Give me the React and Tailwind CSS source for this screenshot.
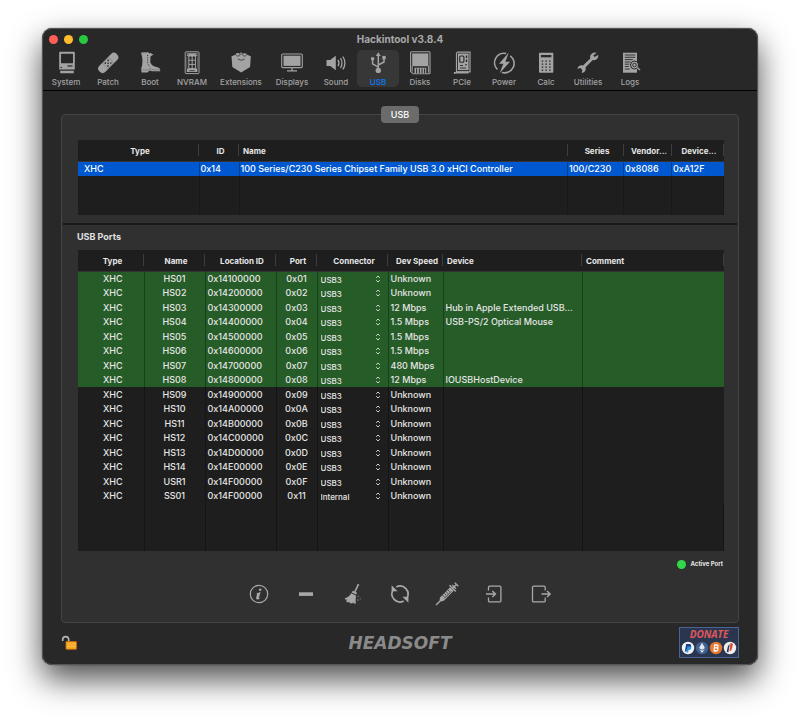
import { useState } from "react";

// Small dark cut-outs inside the toolbar icons use the toolbar colour
const icons = {
  System: (
    <>
      <path d="M6 .8h14q.8 0 .8.8v17H5.200v-17q0-.8.8-.8z" fill="#a3a3a3" />
      <rect x="7" y="2.800" width="12" height="9.500" rx=".6" fill="#282828" />
      <rect x="13.500" y="14.400" width="5" height="1.200" fill="#282828" />
      <rect x="6.600" y="16" width="1.500" height="1" fill="#282828" />
      <rect x="6.200" y="19.700" width="13.600" height="2.600" rx=".4" fill="#a3a3a3" />
    </>
  ),
  Patch: (
    <g transform="rotate(-45 12 12)">
      <rect x="0" y="7.800" width="24.500" height="8.600" rx="4" fill="#a3a3a3" />
      <rect x="8" y="8.300" width="8.200" height="7.600" fill="none" stroke="#6b6b6b" strokeWidth=".5" />
      <g fill="#282828">
        <circle cx="10" cy="10.200" r=".8" />
        <circle cx="14" cy="10.200" r=".8" />
        <circle cx="12" cy="12.100" r=".8" />
        <circle cx="10" cy="14" r=".8" />
        <circle cx="14" cy="14" r=".8" />
      </g>
    </g>
  ),
  Boot: (
    <>
      <path
        d="M3 1.600 10.500 1.300 11 2.500 12.500 2 15.400 3.500 12.500 5.500 12.300 11.500Q13.500 14.600 16.500 15.600 21.800 16.400 22.200 18.500V20.300H14L11.500 19.600 9.500 21.500H3.500L3.200 18Q5.800 10 3 1.600z"
        fill="#a3a3a3"
      />
      <path d="M9.600 4v7.500q.6 3 3 4.600" fill="none" stroke="#282828" strokeWidth=".9" strokeDasharray="1 1.200" />
      <path d="M4 19h6l2-1.500 3 1.300h7" fill="none" stroke="#6b6b6b" strokeWidth=".6" />
    </>
  ),
  NVRAM: (
    <>
      <rect x="5.200" y=".8" width="13.800" height="21.800" rx=".8" fill="none" stroke="#a3a3a3" strokeWidth="1" />
      <path d="M6.800 2.300h10.600v3h-1.500v12.200h1.500v3.500H6.800v-3.500h1.500V5.300H6.800z" fill="#a3a3a3" />
      <path d="M6.800 6v11M17.400 6v11" stroke="#8a8a8a" strokeWidth=".6" />
      <g fill="#282828">
        <rect x="9.400" y="5.500" width="2.200" height="3.200" />
        <rect x="12.700" y="5.500" width="2.200" height="3.200" />
        <rect x="9.400" y="9.700" width="2.200" height="3.200" />
        <rect x="12.700" y="9.700" width="2.200" height="3.200" />
        <rect x="9.400" y="13.900" width="2.200" height="3.200" />
        <rect x="12.700" y="13.900" width="2.200" height="3.200" />
        <circle cx="8" cy="3.600" r=".6" />
        <circle cx="16.200" cy="3.600" r=".6" />
      </g>
      <path d="M9.500 19.700h5.200" stroke="#282828" strokeWidth=".8" />
    </>
  ),
  Extensions: (
    <>
      <path d="M2.500 5.200 7 3.400V2.600q2-1 3.600 0L12 1.300l2 1.200q1.800-.8 3.500.2v.8l4.300 1.700-.7 10.800L12.200 21.600 3.300 16z" fill="#a3a3a3" />
      <path d="M7 4.500q2 1.300 3.800 0M13.600 4.500q2 1.300 3.800 0M8.800 8q3.400 2.600 6.800 0M10 2.800q2.200.9 4.400 0" fill="none" stroke="#333" strokeWidth=".8" />
    </>
  ),
  Displays: (
    <>
      <rect x="1.700" y="3" width="20.600" height="13.600" rx="1" fill="none" stroke="#a3a3a3" strokeWidth="1.100" />
      <rect x="3.500" y="4.700" width="17" height="10.200" fill="#a3a3a3" />
      <path d="M12 16.600v2.800M7 19.800h10" stroke="#a3a3a3" strokeWidth="1.300" />
    </>
  ),
  Sound: (
    <>
      <path d="M2.500 9H6.200l5.600-4.300v14.600L6.200 15H2.500z" fill="#a3a3a3" />
      <path d="M14 8.800q2 3.200 0 6.400M16.500 7q3 5 0 10M18.900 5.500q4 6.500 0 13" fill="none" stroke="#a3a3a3" strokeWidth="1.300" />
    </>
  ),
  USB: (
    <>
      <path d="M12.300 4v14M12.300 16.200 6.600 12.800V8.500M12.300 14l5.700-3V7" fill="none" stroke="#a3a3a3" strokeWidth="1.500" />
      <path d="M12.300 1.300 14.800 5H9.800z" fill="#a3a3a3" />
      <circle cx="12.300" cy="19.400" r="2.700" fill="#a3a3a3" />
      <circle cx="6.600" cy="7.800" r="1.800" fill="#a3a3a3" />
      <rect x="16.300" y="4.900" width="3.400" height="3.400" fill="#a3a3a3" />
    </>
  ),
  Disks: (
    <>
      <path d="M3.600.8H21a1 1 0 0 1 1 1v20a1 1 0 0 1-1 1H5.200L2.600 20.500V1.800a1 1 0 0 1 1-1z" fill="none" stroke="#a3a3a3" strokeWidth="1.100" />
      <rect x="4.200" y="2.400" width="16.200" height="12.800" fill="#a3a3a3" />
      <path d="M6.500 16.700h11.800v5.600H6.500z" fill="#a3a3a3" />
      <path d="M8.600 17.500v4.800M11.300 17.500v4.800M14 17.500v4.800M16.600 17.500v4.800" stroke="#282828" strokeWidth="1" />
      <path d="M4.200 15v5.500M20.400 15v6.700" stroke="#a3a3a3" strokeWidth="1" />
    </>
  ),
  PCIe: (
    <>
      <path d="M7.500 1.200H20v19.600H6.500V2.200zM4.500 23v-1.500h3" fill="none" stroke="#a3a3a3" strokeWidth="1.200" />
      <path d="M4.500 22.500h14v-2H6v1z" fill="#a3a3a3" />
      <rect x="8" y="2.500" width="10.600" height="16.600" fill="#a3a3a3" />
      <rect x="9.700" y="5" width="4.200" height="6.200" rx="1" fill="none" stroke="#282828" strokeWidth="1.100" />
      <rect x="15.800" y="4.500" width="1.400" height="2.500" fill="#282828" />
      <rect x="15.800" y="8.500" width="1.400" height="2.500" fill="#282828" />
      <rect x="15.300" y="13" width="1.400" height="1.400" fill="#282828" />
      <path d="M10 14.500h3M10 17h6" stroke="#282828" strokeWidth=".9" />
    </>
  ),
  Power: (
    <>
      <path d="M14.200 2.500a9.500 9.500 0 0 0-8.800 16M18.300 4.800a9.500 9.500 0 0 1-8.400 16.700" fill="none" stroke="#a3a3a3" strokeWidth="1.600" />
      <path d="M16.800 1.400 7 12.800h4.300L7.600 22.300 18 10.700h-4.600z" fill="#a3a3a3" />
    </>
  ),
  Calc: (
    <>
      <rect x="5" y="1.700" width="14.300" height="20" rx=".7" fill="#a3a3a3" />
      <rect x="6.900" y="4" width="10.500" height="2.300" fill="#282828" />
      <path d="M7.700 10.200h9.200M7.700 13.200h9.200M7.700 16.200h9.200M7.700 19.200h9.200" stroke="#282828" strokeWidth="1.300" strokeDasharray="1.500 2.200" />
    </>
  ),
  Utilities: (
    <path
      d="M20.700 1.700q-2.500-.8-4.700.7-2.500 1.700-1.700 5L7 14.500q-2.300-.8-4.200.7-1.300 1-1.300 2.600l3-.7 1.800 1.900-.6 3q2 0 3.300-1.700 1.300-1.800.6-4.100l7.200-7.200q3 .6 4.600-1.500 1.200-1.600.8-3.800L18.800 6l-1.600-1.500z"
      fill="#a3a3a3"
    />
  ),
  Logs: (
    <>
      <rect x="5" y="1.700" width="14" height="20" fill="#a3a3a3" />
      <path d="M6.800 4h10.400M6.800 6.300h10.400M6.800 8.600h8M6.800 11h5.500M6.800 13.200h4.500M6.800 15.500h4M6.800 18h5" stroke="#282828" strokeWidth=".9" />
      <circle cx="16.500" cy="14" r="4" fill="#a3a3a3" stroke="#282828" strokeWidth="1" />
      <circle cx="16.500" cy="14" r="1.800" fill="none" stroke="#282828" strokeWidth=".9" />
      <path d="m19.200 16.500 2.800 2.600" stroke="#a3a3a3" strokeWidth="1.400" />
    </>
  ),
};

const toolbar = [
  { name: "System", width: "w-[42px]" },
  { name: "Patch", width: "w-[42px]" },
  { name: "Boot", width: "w-[42px]" },
  { name: "NVRAM", width: "w-[42px]" },
  { name: "Extensions", width: "w-[56px]" },
  { name: "Displays", width: "w-[46px]" },
  { name: "Sound", width: "w-[42px]" },
  { name: "USB", width: "w-[42px]" },
  { name: "Disks", width: "w-[42px]" },
  { name: "PCIe", width: "w-[42px]" },
  { name: "Power", width: "w-[42px]" },
  { name: "Calc", width: "w-[42px]" },
  { name: "Utilities", width: "w-[42px]" },
  { name: "Logs", width: "w-[42px]" },
];

const controllerColumns = [
  { title: "Type", width: "w-[121px]", align: "text-center" },
  { title: "ID", width: "w-[40px]", align: "text-center" },
  { title: "Name", width: "", align: "text-left" },
  { title: "Series", width: "w-[56px]", align: "text-center" },
  { title: "Vendor...", width: "w-[48px]", align: "text-center" },
  { title: "Device...", width: "w-[52px]", align: "text-center" },
];

const portColumns = [
  { title: "Type", width: "w-[66px]", align: "text-center" },
  { title: "Name", width: "w-[61px]", align: "text-center" },
  { title: "Location ID", width: "w-[71px]", align: "text-center" },
  { title: "Port", width: "w-[41px]", align: "text-center" },
  { title: "Connector", width: "w-[71px]", align: "text-center" },
  { title: "Dev Speed", width: "w-[55px]", align: "text-center" },
  { title: "Device", width: "w-[139px]", align: "text-left" },
  { title: "Comment", width: "", align: "text-left" },
];

const ports = [
  { name: "HS01", location: "0x14100000", port: "0x01", connector: "USB3", speed: "Unknown", device: "", active: true },
  { name: "HS02", location: "0x14200000", port: "0x02", connector: "USB3", speed: "Unknown", device: "", active: true },
  { name: "HS03", location: "0x14300000", port: "0x03", connector: "USB3", speed: "12 Mbps", device: "Hub in Apple Extended USB...", active: true },
  { name: "HS04", location: "0x14400000", port: "0x04", connector: "USB3", speed: "1.5 Mbps", device: "USB-PS/2 Optical Mouse", active: true },
  { name: "HS05", location: "0x14500000", port: "0x05", connector: "USB3", speed: "1.5 Mbps", device: "", active: true },
  { name: "HS06", location: "0x14600000", port: "0x06", connector: "USB3", speed: "1.5 Mbps", device: "", active: true },
  { name: "HS07", location: "0x14700000", port: "0x07", connector: "USB3", speed: "480 Mbps", device: "", active: true },
  { name: "HS08", location: "0x14800000", port: "0x08", connector: "USB3", speed: "12 Mbps", device: "IOUSBHostDevice", active: true },
  { name: "HS09", location: "0x14900000", port: "0x09", connector: "USB3", speed: "Unknown", device: "" },
  { name: "HS10", location: "0x14A00000", port: "0x0A", connector: "USB3", speed: "Unknown", device: "" },
  { name: "HS11", location: "0x14B00000", port: "0x0B", connector: "USB3", speed: "Unknown", device: "" },
  { name: "HS12", location: "0x14C00000", port: "0x0C", connector: "USB3", speed: "Unknown", device: "" },
  { name: "HS13", location: "0x14D00000", port: "0x0D", connector: "USB3", speed: "Unknown", device: "" },
  { name: "HS14", location: "0x14E00000", port: "0x0E", connector: "USB3", speed: "Unknown", device: "" },
  { name: "USR1", location: "0x14F00000", port: "0x0F", connector: "USB3", speed: "Unknown", device: "" },
  { name: "SS01", location: "0x14F00000", port: "0x11", connector: "Internal", speed: "Unknown", device: "" },
];

const actions = [
  {
    name: "Info",
    icon: (
      <>
        <circle cx="12" cy="12" r="8.700" fill="none" stroke="#a8a8a8" strokeWidth="1.200" />
        <circle cx="13.200" cy="7.700" r="1.300" fill="#a8a8a8" />
        <path d="M9.300 11.200q2.300-.3 4.300-1.200l-1.700 5.800q-.2 1.100 1.900-.6-1.400 2.400-3.400 2.400-1.900-.2-1.200-2.200l.9-3.300z" fill="#a8a8a8" />
      </>
    ),
  },
  { name: "Remove", icon: <rect x="5" y="10.300" width="14" height="3.600" fill="#a8a8a8" /> },
  {
    name: "Clear",
    icon: (
      <>
        <path d="M17.500 2.200 13.800 10" stroke="#a8a8a8" strokeWidth="1.600" />
        <path d="m11.800 8.800 4.200 2-.6 1.800-4.700-2.200z" fill="#a8a8a8" />
        <path d="M10.200 11.200 15 13.500q-.6 4.500-.2 8.200l-2.300-.5-.4-1-.8 1.400-3-.5.4-1.500-1.800 1-2-1.400 1.600-1.600-2 .2-.8-1.600q4.500-1.200 6.500-5z" fill="#a8a8a8" />
        <g fill="#8a8a8a">
          <circle cx="17.200" cy="14.500" r=".7" />
          <circle cx="17" cy="18" r=".8" />
          <circle cx="19.300" cy="16.800" r=".6" />
        </g>
      </>
    ),
  },
  {
    name: "Refresh",
    icon: (
      <>
        <path d="M8.300 4.900A8 8 0 0 1 18.800 16.200M15.700 19.100A8 8 0 0 1 5.200 7.800" fill="none" stroke="#a8a8a8" strokeWidth="1.700" />
        <path d="M3.600 3.300v6h6zM20.400 20.700v-6h-6z" fill="#a8a8a8" />
      </>
    ),
  },
  {
    name: "Inject",
    icon: (
      <g transform="rotate(-45 12 12)">
        <path d="M-3.500 12H4M20 12h5" stroke="#a8a8a8" strokeWidth="1.400" />
        <path d="M2.500 10.900 5 9.500h14v5H5l-2.500-1.400z" fill="#a8a8a8" />
        <path d="M20 7.500v9M22 9.300v5.400M25.500 9.500v5" stroke="#a8a8a8" strokeWidth="1.400" />
        <path d="M8 9.800v2.400M10.500 9.800v2.400M13 9.800v2.400M15.500 9.800v2.400M7 13.200h10" stroke="#303030" strokeWidth=".8" />
      </g>
    ),
  },
  {
    name: "Import",
    icon: (
      <>
        <path d="M6.500 8.500V5.300q0-1.200 1.200-1.200h10q1.200 0 1.200 1.200v13.400q0 1.200-1.200 1.200h-10q-1.200 0-1.200-1.200v-3.200" fill="none" stroke="#a8a8a8" strokeWidth="1.300" />
        <path d="M4 12h9M10.300 8.900 13.500 12l-3.200 3.100" fill="none" stroke="#a8a8a8" strokeWidth="1.400" />
      </>
    ),
  },
  {
    name: "Export",
    icon: (
      <>
        <path d="M16.200 8.500V5.300q0-1.200-1.200-1.200H4.700q-1.200 0-1.200 1.200v13.400q0 1.200 1.200 1.200H15q1.200 0 1.200-1.200v-3.200" fill="none" stroke="#a8a8a8" strokeWidth="1.300" />
        <path d="M12.500 12H21M18 8.900l3.200 3.100-3.200 3.100" fill="none" stroke="#a8a8a8" strokeWidth="1.400" />
      </>
    ),
  },
];

function HeaderRow({ columns }) {
  return (
    <thead>
      <tr className="h-[21px] border-b border-[#333]">
        {columns.map((col) => (
          <th key={col.title} className={`${col.width} ${col.align} p-0 text-[8px] font-bold text-[#e6e6e6]`}>
            <div className="h-3 border-r border-[#3d3d3d] pt-px pl-1 leading-3 whitespace-nowrap">{col.title}</div>
          </th>
        ))}
      </tr>
    </thead>
  );
}

function ConnectorSelect({ value, label }) {
  return (
    <div className="flex items-center justify-between pr-[7px] pl-[3px]">
      <select
        aria-label={label}
        defaultValue={value}
        className="h-3 w-12 appearance-none bg-transparent pt-px text-[8px] leading-3 text-[#e6e6e6] outline-none"
      >
        <option>USB2</option>
        <option>USB3</option>
        <option>Internal</option>
      </select>
      <svg width="6" height="8" viewBox="0 0 6 8" fill="none" stroke="#d4d4d4" strokeWidth="1">
        <path d="M1.200 2.800 3 1l1.800 1.800M1.200 5.200 3 7l1.800-1.800" />
      </svg>
    </div>
  );
}

function CoinIcons() {
  return (
    <svg width="56" height="14" viewBox="0 0 56 14">
      <circle cx="7" cy="7" r="6.200" fill="#f1f3f6" />
      <path d="M5.200 3h3.300q2.200.3 1.700 2.700-.6 2-3 2H6L5.500 10.500H3.800z" fill="#1c3f86" />
      <path d="M6.300 5.500h3.900q.8 3.200-2.600 3.600l-.5 2.400H5.400z" fill="#2997d8" />
      <circle cx="21" cy="7" r="6.200" fill="#43628f" />
      <path d="m21 1.800 2.900 5.100L21 8.800l-2.900-1.900zM18.200 8l2.800 1.800L23.800 8 21 12z" fill="#e6ebf2" />
      <circle cx="35" cy="7" r="6.200" fill="#e5792f" />
      <path d="M33.700 3.500 33 10.300M33.500 4h2.200q1.700.2 1.300 1.700-.4 1.200-1.800 1.200h-1.700 2q1.700.2 1.300 1.800-.4 1.300-2 1.300h-2" fill="none" stroke="#fff" strokeWidth="1.300" />
      <circle cx="49" cy="7" r="6.200" fill="#eceef0" />
      <path d="M49.500 1.800 52 3l-1.500 6-2 1.500z" fill="#e0452f" />
      <path d="m48.800 3-1.500 8.500-1.600-.7L47 5z" fill="#2b3550" />
    </svg>
  );
}

export default function App() {
  const [activeTool, setActiveTool] = useState("USB");

  return (
    <div className="min-h-screen overflow-hidden bg-white px-[42px] pt-7 pb-14 font-['Inter',sans-serif]">
      <div className="overflow-hidden rounded-[10px] border border-[#555] bg-[#282828] shadow-[0_0_1px_#000,0_14px_32px_rgba(0,0,0,0.7)]">
        {/* Title bar and toolbar */}
        <header className="border-b border-black pb-[3px]">
          <div className="grid h-[21px] grid-cols-[1fr_auto_1fr] items-center px-1.5">
            <div className="flex gap-[6px]">
              <button aria-label="Close" className="size-[9px] rounded-full bg-[#ff5f57]" />
              <button aria-label="Minimize" className="size-[9px] rounded-full bg-[#febc2e]" />
              <button aria-label="Zoom" className="size-[9px] rounded-full bg-[#28c840]" />
            </div>
            <h1 className="text-[10px] font-bold text-[#a8a8a8]">Hackintool v3.8.4</h1>
          </div>
          <nav className="flex pl-0.5">
            {toolbar.map((item) => (
              <button
                key={item.name}
                onClick={() => setActiveTool(item.name)}
                className={`${item.width} flex h-[37px] flex-col items-center rounded-[5px] ${
                  activeTool === item.name ? "bg-[#373737] text-[#0a7bf5]" : "text-[#a3a3a3]"
                }`}
              >
                <svg width="24" height="24" viewBox="0 0 24 24" className="mt-px shrink-0">
                  {icons[item.name]}
                </svg>
                <span className="mt-0.5 text-[8px] leading-[10px] font-medium">{item.name}</span>
              </button>
            ))}
          </nav>
        </header>

        <main className="flex flex-col px-[18px] pt-[15px]">
          <button className="z-10 h-[17px] w-[38px] self-center rounded-[4px] bg-[#6b6b6b] text-[9px] leading-[14px] font-medium text-white">
            USB
          </button>

          <div className="-mt-[9px] rounded-[4px] border border-[#454545] bg-[#303030]">
            <section className="pt-[25px] pr-[14px] pb-2 pl-4">
              <table className="w-full table-fixed border-collapse bg-[#1e1e1e] text-[9px]">
                <HeaderRow columns={controllerColumns} />
                <tbody>
                  <tr className="h-[15px] bg-[#0058d0] leading-[14px] font-medium text-white">
                    <td className="border-r border-black/30 p-0 pl-1.5">XHC</td>
                    <td className="border-r border-black/30 p-0 pl-px">0x14</td>
                    <td className="border-r border-black/30 p-0 pl-px whitespace-nowrap">
                      100 Series/C230 Series Chipset Family USB 3.0 xHCI Controller
                    </td>
                    <td className="border-r border-black/30 p-0 pl-px">100/C230</td>
                    <td className="border-r border-black/30 p-0 pl-px">0x8086</td>
                    <td className="p-0 pl-px">0xA12F</td>
                  </tr>
                  <tr className="h-[39px]">
                    {controllerColumns.map((col) => (
                      <td key={col.title} className="border-r border-black/20 p-0" />
                    ))}
                  </tr>
                </tbody>
              </table>
            </section>

            <hr className="mx-px border-t-2 border-[#191919]" />

            <section className="pt-1 pr-[14px] pl-4">
              <h2 className="-ml-px text-[9px] leading-4 font-bold text-[#e0e0e0]">USB Ports</h2>
              <table className="mt-[5px] w-full table-fixed border-collapse bg-[#1e1e1e] text-[9px]">
                <HeaderRow columns={portColumns} />
                <tbody>
                  {ports.map((row) => (
                    <tr
                      key={row.name}
                      className={`leading-[14px] font-medium text-[#e6e6e6] odd:h-[15px] even:h-[14px] ${
                        row.active ? "bg-[#265c28]" : ""
                      }`}
                    >
                      <td className="border-r border-black/30 p-0 pl-1 text-center">XHC</td>
                      <td className="border-r border-black/30 p-0 text-center">{row.name}</td>
                      <td className="border-r border-black/30 p-0 pl-0.5">{row.location}</td>
                      <td className="border-r border-black/30 p-0 text-center">{row.port}</td>
                      <td className="border-r border-black/30 p-0">
                        <ConnectorSelect value={row.connector} label={`Connector for ${row.name}`} />
                      </td>
                      <td className="border-r border-black/30 p-0 pl-0.5 whitespace-nowrap">{row.speed}</td>
                      <td className="border-r border-black/30 p-0 pl-0.5 whitespace-nowrap">{row.device}</td>
                      <td className="p-0" />
                    </tr>
                  ))}
                  <tr className="h-[48px]">
                    {portColumns.map((col) => (
                      <td key={col.title} className="border-r border-black/30 p-0" />
                    ))}
                  </tr>
                </tbody>
              </table>

              <div className="mt-2 flex items-center justify-end gap-[5px] pr-px">
                <span className="size-[9px] rounded-full bg-[#32d74b]" />
                <span className="text-[6px] leading-[10px] font-bold text-[#e6e6e6]">Active Port</span>
              </div>
            </section>

            <div className="mt-[13px] mb-4 flex justify-center gap-[23px]">
              {actions.map((action) => (
                <button key={action.name} aria-label={action.name}>
                  <svg width="24" height="24" viewBox="0 0 24 24">
                    {action.icon}
                  </svg>
                </button>
              ))}
            </div>
          </div>
        </main>

        <footer className="grid grid-cols-[1fr_auto_1fr] items-center px-[18px] pt-1 pb-1.5">
          <button aria-label="Unlock" className="size-4">
            <svg width="16" height="16" viewBox="0 0 16 16">
              <path d="M1.700 6V4.600a3 3 0 0 1 6 0V7" fill="none" stroke="#b5b5b5" strokeWidth="1.600" />
              <rect x="5" y="6.500" width="10.500" height="7.800" rx=".5" fill="#f5a623" stroke="#c9690c" strokeWidth=".8" />
              <path d="M5.500 9h9.500M5.500 11.500h9.500" stroke="#fbc04a" strokeWidth=".8" />
            </svg>
          </button>
          <span className="font-['DejaVu_Sans',sans-serif] text-[17px] leading-5 font-bold text-[#8a8a8a] italic">
            HEADSOFT
          </span>
          <button className="flex h-[31px] w-[60px] flex-col items-center justify-self-end border border-[#4a6494] bg-[#2a3650]">
            <span className="font-['Open_Sans',sans-serif] text-[10px] leading-[13px] font-bold text-[#e0585a] italic">
              DONATE
            </span>
            <CoinIcons />
          </button>
        </footer>
      </div>
    </div>
  );
}
